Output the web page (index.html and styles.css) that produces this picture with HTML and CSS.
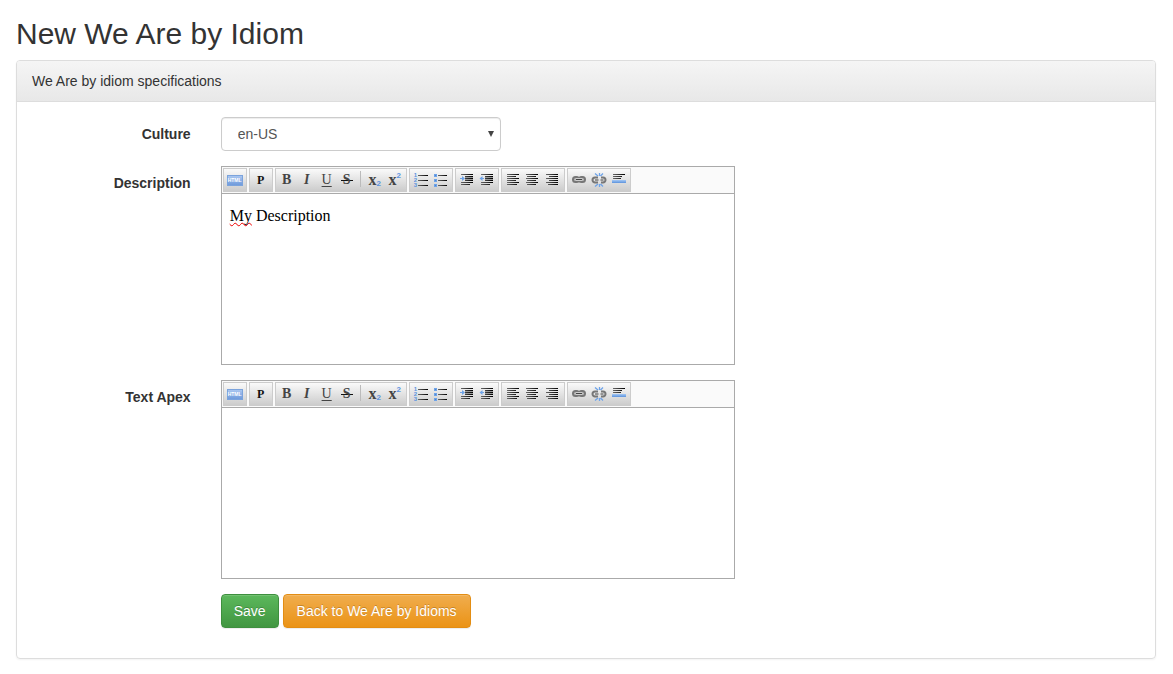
FILE: index.html
```html
<!DOCTYPE html>
<html lang="en">
<head>
<meta charset="utf-8">
<title>New We Are by Idiom</title>
<link rel="stylesheet" href="styles.css">
</head>
<body>
<svg class="sprite" aria-hidden="true">
  <defs>
    <linearGradient id="ink" x1="0" x2="1" y1="0" y2="0"><stop offset="0" stop-color="#666"/><stop offset="1" stop-color="#000"/></linearGradient>
    <linearGradient id="sky" x1="0" x2="0" y1="0" y2="1"><stop offset="0" stop-color="#a4c8f5"/><stop offset="1" stop-color="#5d93dc"/></linearGradient>
  </defs>
  <symbol id="i-ul" viewBox="0 0 16 16">
    <path d="M1 2h3v3H1zM1 7h3v3H1zM1 12h3v3H1z" fill="#6ea3e8"/>
    <path d="M2 3h1v1H2zM2 8h1v1H2zM2 13h1v1H2z" fill="#4d86d2"/>
    <path d="M5 3h9v1H5zM5 8h9v1H5zM5 13h9v1H5z" fill="url(#ink)"/>
  </symbol>
  <symbol id="i-indent" viewBox="0 0 16 16">
    <path d="M2 2h12v1H2zM6 4h8v1H6zM6 6h8v1H6zM6 8h8v1H6zM2 10h12v1H2zM2 12h9v1H2z" fill="url(#ink)"/>
    <path d="M6 5h8v1H6zM6 7h8v1H6z" fill="#999"/>
    <path d="M1 6h2V4l3 2.500L3 9V7H1z" fill="#6ea3e8"/>
  </symbol>
  <symbol id="i-outdent" viewBox="0 0 16 16">
    <path d="M2 2h12v1H2zM6 4h8v1H6zM6 6h8v1H6zM6 8h8v1H6zM2 10h12v1H2zM2 12h9v1H2z" fill="url(#ink)"/>
    <path d="M6 5h8v1H6zM6 7h8v1H6z" fill="#999"/>
    <path d="M5 6H3.500V4L0.500 6.500L3.500 9V7H5z" fill="#6ea3e8"/>
  </symbol>
  <symbol id="i-left" viewBox="0 0 16 16"><path d="M2 2h12v1H2zM2 4h9v1H2zM2 6h12v1H2zM2 8h9v1H2zM2 10h12v1H2zM2 12h10v1H2z" fill="url(#ink)"/></symbol>
  <symbol id="i-center" viewBox="0 0 16 16"><path d="M1 2h12v1H1zM2 4h9v1H2zM1 6h12v1H1zM2 8h9v1H2zM1 10h12v1H1zM2 12h9v1H2z" fill="url(#ink)"/></symbol>
  <symbol id="i-right" viewBox="0 0 16 16"><path d="M1 2h12v1H1zM4 4h9v1H4zM1 6h12v1H1zM4 8h9v1H4zM1 10h12v1H1zM3 12h10v1H3z" fill="url(#ink)"/></symbol>
  <symbol id="i-link" viewBox="0 0 16 16">
    <g fill="#bbb" stroke="#777" stroke-width="2"><rect x="2" y="5" width="6" height="5" rx="2.500"/><rect x="8" y="5" width="6" height="5" rx="2.500"/></g>
    <path d="M5 7.500h6" stroke="#ddd" stroke-width="3"/><path d="M5 7.500h6" stroke="#444" stroke-width="1.200"/>
  </symbol>
  <symbol id="i-unlink" viewBox="0 0 16 16">
    <path d="M7 5.500H4a2.500 2.500 0 0 0 0 5h3M10 5.500h2a2.500 2.500 0 0 1 0 5h-2" fill="none" stroke="#777" stroke-width="2"/>
    <path d="M4 8h3.500M9.500 8h3" stroke="#444" stroke-width="1.200"/>
    <path d="M4 1.500l3 2.500M12 1.500L9.500 4M8.500 1v3M4 14.500l3-2.500M12 14.500L9.500 12M8.500 12v3" stroke="#6ea3e8" stroke-width="1.300"/>
  </symbol>
  <symbol id="i-rule" viewBox="0 0 16 16"><path d="M2 2h12v1H2zM2 4h9v1H2zM2 6h8v1H2z" fill="url(#ink)"/><rect x="1" y="8" width="14" height="3" fill="url(#sky)"/></symbol>
</svg>

<main class="page">
  <h2 class="title">New We Are by Idiom</h2>
  <section class="panel">
    <div class="panel-heading">We Are by idiom specifications</div>
    <form class="panel-body">
      <div class="row">
        <label class="label" for="culture">Culture</label>
        <div class="select-box">
          <select class="select" id="culture"><option>en-US</option></select>
          <svg class="arrow" viewBox="0 0 6 6" aria-hidden="true"><path d="M0 0h6L3 6z" fill="#444"/></svg>
        </div>
      </div>

      <div class="row">
        <label class="label" id="l-desc">Description</label>
        <div class="editor">
          <div class="toolbar" role="toolbar" aria-label="Description formatting">
            <div class="group group-single"><button type="button" class="tool"><span class="source">HTML</span></button></div>
            <div class="group group-single"><button type="button" class="tool para">P</button></div>
            <div class="group">
              <button type="button" class="tool">B</button><button type="button" class="tool italic">I</button><button type="button" class="tool underline">U</button><button type="button" class="tool strike">S</button>
              <span class="sep"></span>
              <button type="button" class="tool script">x<sub>2</sub></button><button type="button" class="tool script">x<sup>2</sup></button>
            </div>
            <div class="group"><button type="button" class="tool" aria-label="Numbered list"><span class="ol"><span class="ol-item">1</span><span class="ol-item">2</span><span class="ol-item">3</span></span></button><button type="button" class="tool" aria-label="Bulleted list"><svg class="icon"><use href="#i-ul"/></svg></button></div>
            <div class="group"><button type="button" class="tool" aria-label="Indent"><svg class="icon"><use href="#i-indent"/></svg></button><button type="button" class="tool" aria-label="Outdent"><svg class="icon"><use href="#i-outdent"/></svg></button></div>
            <div class="group"><button type="button" class="tool" aria-label="Align left"><svg class="icon"><use href="#i-left"/></svg></button><button type="button" class="tool" aria-label="Center"><svg class="icon"><use href="#i-center"/></svg></button><button type="button" class="tool" aria-label="Align right"><svg class="icon"><use href="#i-right"/></svg></button></div>
            <div class="group"><button type="button" class="tool" aria-label="Link"><svg class="icon"><use href="#i-link"/></svg></button><button type="button" class="tool" aria-label="Unlink"><svg class="icon"><use href="#i-unlink"/></svg></button><button type="button" class="tool" aria-label="Horizontal rule"><svg class="icon"><use href="#i-rule"/></svg></button></div>
          </div>
          <div class="content" contenteditable="true" role="textbox" aria-multiline="true" aria-labelledby="l-desc"><span class="misspelt">My</span> Description</div>
        </div>
      </div>

      <div class="row">
        <label class="label" id="l-apex">Text Apex</label>
        <div class="editor">
          <div class="toolbar" role="toolbar" aria-label="Text Apex formatting">
            <div class="group group-single"><button type="button" class="tool"><span class="source">HTML</span></button></div>
            <div class="group group-single"><button type="button" class="tool para">P</button></div>
            <div class="group">
              <button type="button" class="tool">B</button><button type="button" class="tool italic">I</button><button type="button" class="tool underline">U</button><button type="button" class="tool strike">S</button>
              <span class="sep"></span>
              <button type="button" class="tool script">x<sub>2</sub></button><button type="button" class="tool script">x<sup>2</sup></button>
            </div>
            <div class="group"><button type="button" class="tool" aria-label="Numbered list"><span class="ol"><span class="ol-item">1</span><span class="ol-item">2</span><span class="ol-item">3</span></span></button><button type="button" class="tool" aria-label="Bulleted list"><svg class="icon"><use href="#i-ul"/></svg></button></div>
            <div class="group"><button type="button" class="tool" aria-label="Indent"><svg class="icon"><use href="#i-indent"/></svg></button><button type="button" class="tool" aria-label="Outdent"><svg class="icon"><use href="#i-outdent"/></svg></button></div>
            <div class="group"><button type="button" class="tool" aria-label="Align left"><svg class="icon"><use href="#i-left"/></svg></button><button type="button" class="tool" aria-label="Center"><svg class="icon"><use href="#i-center"/></svg></button><button type="button" class="tool" aria-label="Align right"><svg class="icon"><use href="#i-right"/></svg></button></div>
            <div class="group"><button type="button" class="tool" aria-label="Link"><svg class="icon"><use href="#i-link"/></svg></button><button type="button" class="tool" aria-label="Unlink"><svg class="icon"><use href="#i-unlink"/></svg></button><button type="button" class="tool" aria-label="Horizontal rule"><svg class="icon"><use href="#i-rule"/></svg></button></div>
          </div>
          <div class="content" contenteditable="true" role="textbox" aria-multiline="true" aria-labelledby="l-apex"></div>
        </div>
      </div>

      <div class="row">
        <div class="actions">
          <button type="submit" class="btn btn-save">Save</button>
          <a href="#" class="btn btn-back">Back to We Are by Idioms</a>
        </div>
      </div>
    </form>
  </section>
</main>
</body>
</html>
```
FILE: styles.css
```css
* { box-sizing: border-box; }
body {
  margin: 0;
  font: 14px/20px "Liberation Sans", Arial, sans-serif;
  color: #333;
  background: #fff;
}
.sprite { position: absolute; width: 0; height: 0; }
.page { padding: 17px 17px 15px 16px; }
.title { margin: 0 0 10px; font-size: 30px; font-weight: 400; line-height: 33px; }

.panel {
  border: 1px solid #ddd;
  border-radius: 4px;
  box-shadow: 0 1px 2px rgba(0, 0, 0, .05);
}
.panel-heading {
  padding: 10px 15px;
  border-bottom: 1px solid #ddd;
  border-radius: 3px 3px 0 0;
  background: linear-gradient(#f5f5f5, #e8e8e8);
}
.panel-body { padding: 15px 0; }
.row { display: grid; grid-template-columns: calc(100% / 6 - 1px) 1fr; margin-bottom: 15px; }
.label { padding: 7px 15px 0; text-align: right; font-weight: 700; }

.select-box { position: relative; width: 280px; margin-left: 15px; }
.select {
  display: block;
  width: 100%;
  height: 34px;
  padding: 6px 16px;
  font: inherit;
  color: #555;
  background: #fff;
  border: 1px solid #ccc;
  border-radius: 4px;
  box-shadow: inset 0 1px 1px rgba(0, 0, 0, .075);
  appearance: none;
}
.arrow { position: absolute; right: 7px; top: 14px; width: 6px; height: 6px; pointer-events: none; }

.editor { width: 514px; margin-left: 15px; border: 1px solid #aaa; }
.toolbar {
  display: flex;
  gap: 2px;
  padding: 1px;
  border-bottom: 1px solid #aaa;
  background: #fafafa;
}
.group {
  display: flex;
  padding: 1px;
  border: 1px solid #ccc;
  background: linear-gradient(#fafafa, #ccc);
}
.tool {
  display: flex;
  align-items: center;
  justify-content: center;
  width: 20px;
  height: 20px;
  padding: 0;
  border: 0;
  background: none;
  color: #444;
  font: 700 14px/20px "Liberation Serif", "Times New Roman", serif;
}
.source {
  width: 16px;
  height: 11px;
  border: 1px solid #7ba3dc;
  background: linear-gradient(#a9c6f0, #6f9bdc);
  color: #fff;
  font: 700 5px/9px "Liberation Sans", Arial, sans-serif;
  text-align: center;
}
.para { font-size: 12px; color: #111; }
.italic { font-style: italic; }
.underline { font-weight: 400; text-decoration: underline; text-underline-offset: 2px; }
.strike { background: linear-gradient(#111, #111) center / 12px 1px no-repeat; }
.script { font-size: 16px; }
.script sub, .script sup { font: 700 8px/8px "Liberation Sans", Arial, sans-serif; color: #5c94df; }
.script sub { padding-top: 8px; }
.script sup { padding-bottom: 8px; }
.sep { width: 1px; height: 16px; margin: 1px 4px 0 3px; background: #bbb; }
.icon { display: block; width: 16px; height: 16px; }
.ol { display: grid; width: 14px; height: 15px; }
.ol-item {
  display: flex;
  gap: 1px;
  align-items: center;
  height: 5px;
  color: #5c94df;
  font: 700 6px/5px "Liberation Sans", Arial, sans-serif;
}
.ol-item::after { content: ""; flex: 1; height: 1px; background: linear-gradient(90deg, #666, #000); }
.content {
  height: 170px;
  padding: 12px 8px;
  font: 16px/20px "Liberation Serif", "Times New Roman", serif;
  color: #000;
  outline: 0;
}
.misspelt { text-decoration: underline wavy #e00 1px; text-decoration-skip-ink: none; text-underline-offset: 1px; }

.actions { grid-column: 2; display: flex; gap: 4px; margin-left: 15px; }
.btn {
  padding: 6px 12px;
  border: 1px solid;
  border-radius: 4px;
  font: inherit;
  color: #fff;
  text-decoration: none;
  text-shadow: 0 -1px 0 rgba(0, 0, 0, .2);
  box-shadow: inset 0 1px 0 rgba(255, 255, 255, .15), 0 1px 1px rgba(0, 0, 0, .075);
}
.btn-save { border-color: #3e8f3e; background: linear-gradient(#5cb85c, #419641); }
.btn-back { padding: 6px 13px; border-color: #e38d13; background: linear-gradient(#f0ad4e, #eb9316); }
```
